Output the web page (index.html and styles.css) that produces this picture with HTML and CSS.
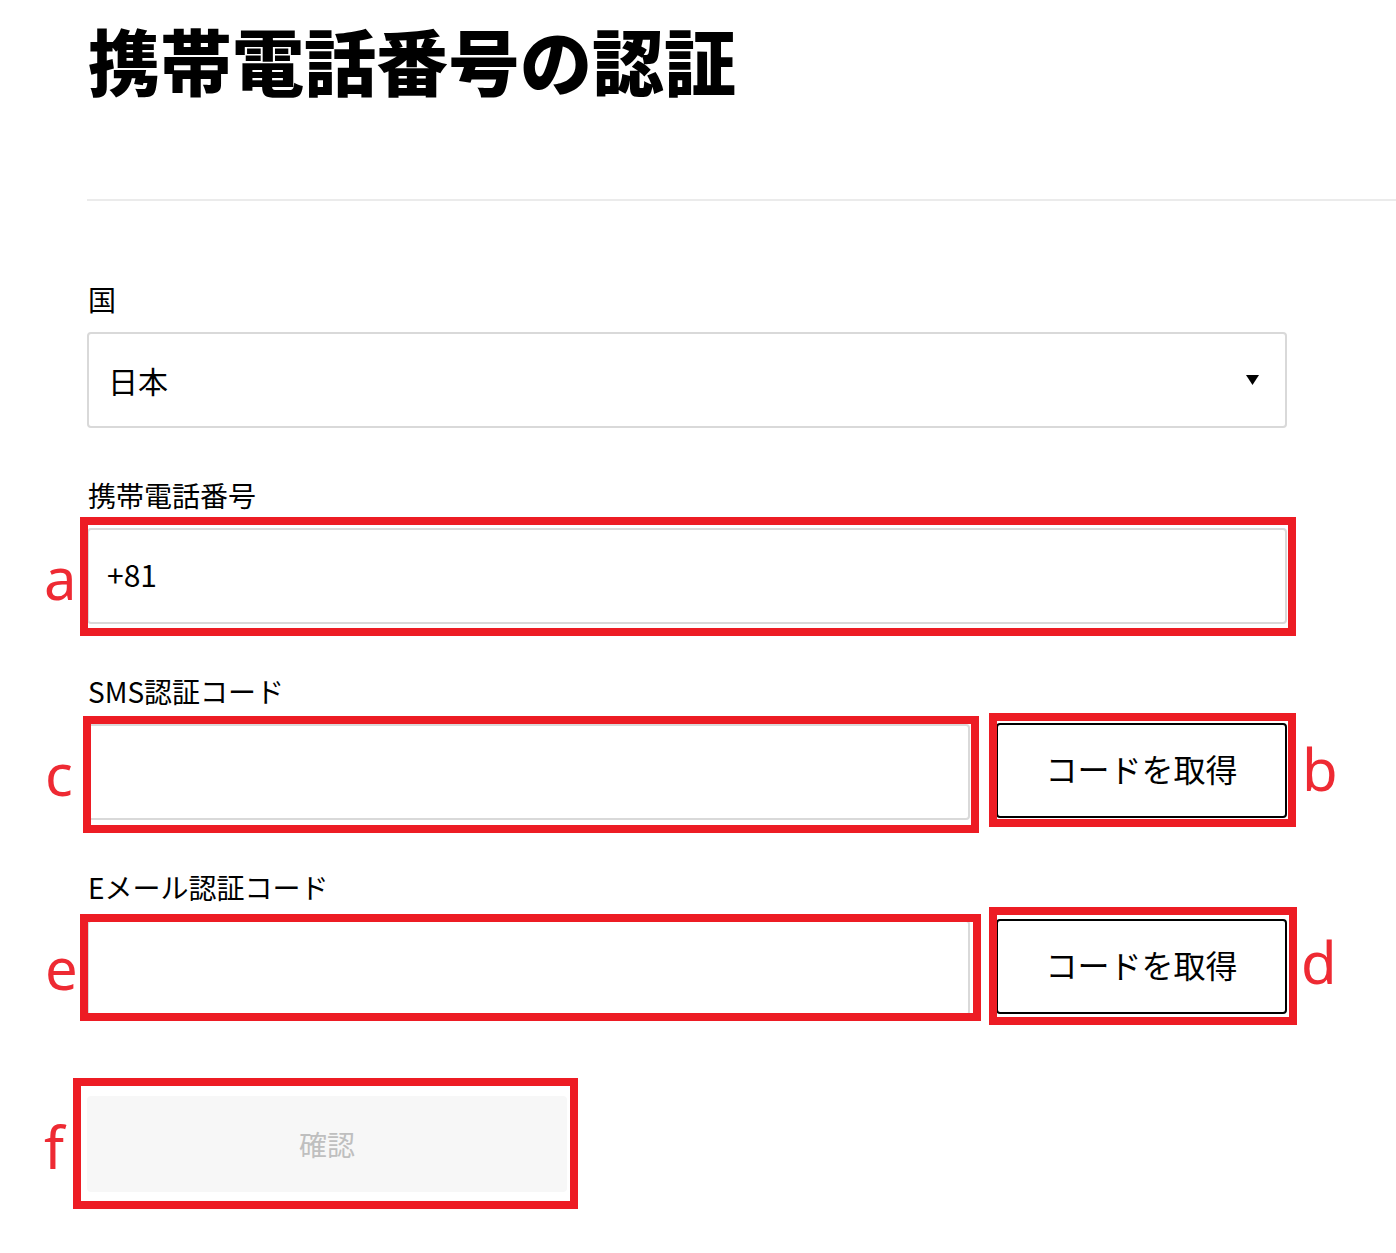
FILE: index.html
```html
<!DOCTYPE html>
<html lang="ja">
<head>
  <meta charset="UTF-8" />
  <meta name="viewport" content="width=device-width, initial-scale=1.0"/>
  <title>携帯電話番号の認証</title>
  <link rel="stylesheet" href="styles.css">
</head>
<body>
  <div class="page">
    <header class="head">
      <h1>携帯電話番号の認証</h1>
    </header>

    <form class="form" onsubmit="return false">
      <div class="field">
        <label>国</label>
        <div class="select">
          <span>日本</span>
          <svg class="caret" width="13" height="10" viewBox="0 0 13 10"><path d="M0 0h13L6.5 10z" fill="#000"/></svg>
        </div>
      </div>

      <div class="field">
        <label>携帯電話番号</label>
        <input class="input" type="text" value="+81">
      </div>

      <div class="field">
        <label>SMS認証コード</label>
        <div class="row">
          <input class="input" type="text">
          <button class="code-btn" type="button">コードを取得</button>
        </div>
      </div>

      <div class="field">
        <label>Eメール認証コード</label>
        <div class="row">
          <input class="input" type="text">
          <button class="code-btn" type="button">コードを取得</button>
        </div>
      </div>

      <button class="submit" type="submit" disabled>確認</button>
    </form>
  </div>

  <!-- annotation marks -->
  <div class="marks">
    <div class="box box-a"></div>
    <div class="box box-b"></div>
    <div class="box box-c"></div>
    <div class="box box-d"></div>
    <div class="box box-e"></div>
    <div class="box box-f"></div>
    <span class="tag tag-a">a</span>
    <span class="tag tag-b">b</span>
    <span class="tag tag-c">c</span>
    <span class="tag tag-d">d</span>
    <span class="tag tag-e">e</span>
    <span class="tag tag-f">f</span>
  </div>
</body>
</html>
```

FILE: styles.css
```css
body {
  margin: 0;
  font-family: "Noto Sans CJK JP", "Noto Sans", sans-serif;
  color: #000;
  background: #fff;
}
.page {
  padding-left: 87px;
}
.head {
  padding: 23px 0 104px;
  border-bottom: 2px solid #ebebeb;
}
.head h1 {
  margin: 0 0 0 1px;
  font-size: 72px;
  line-height: 72px;
  font-weight: 900;
}
.form {
  width: 1200px;
  padding-top: 81px;
}
.field {
  margin-bottom: 50px;
}
.field label {
  display: block;
  font-size: 28px;
  line-height: 34px;
  margin: 0 0 16px 1px;
}
.select,
.input {
  box-sizing: border-box;
  height: 96px;
  border: 2px solid #d9d9d9;
  border-radius: 4px;
  font-family: inherit;
  font-size: 30px;
  color: #000;
  background: #fff;
}
.select {
  display: flex;
  align-items: center;
  justify-content: space-between;
  padding: 0 26px 0 19px;
}
.input {
  display: block;
  width: 100%;
  padding: 0 18px 5px;
  outline: none;
}
.row {
  display: flex;
  gap: 26px;
  align-items: flex-start;
}
.row .input {
  flex: 1;
  width: auto;
  min-width: 0;
}
.code-btn {
  flex: none;
  width: 291px;
  height: 95px;
  margin-top: -1px;
  padding: 0 0 6px;
  border: 2px solid #000;
  border-radius: 4px;
  background: #fff;
  font-family: inherit;
  font-size: 32px;
  color: #000;
}
.submit {
  display: block;
  width: 480px;
  height: 96px;
  margin-top: 80px;
  border: none;
  border-radius: 4px;
  background: #f7f7f7;
  font-family: inherit;
  font-size: 28px;
  color: #bfbfbf;
}

/* red annotation overlay */
.marks {
  position: absolute;
  top: 0;
  left: 0;
}
.box {
  position: absolute;
  box-sizing: border-box;
  border: 8px solid #ed1c24;
}
.box-a { left: 80px; top: 517px; width: 1216px; height: 119px; }
.box-c { left: 83px; top: 716px; width: 896px; height: 117px; }
.box-b { left: 989px; top: 713px; width: 307px; height: 114px; }
.box-e { left: 80px; top: 914px; width: 901px; height: 107px; }
.box-d { left: 989px; top: 907px; width: 308px; height: 118px; }
.box-f { left: 73px; top: 1078px; width: 505px; height: 131px; }
.tag {
  position: absolute;
  font-family: "Noto Sans", sans-serif;
  font-size: 58px;
  line-height: 58px;
  color: #ee2a33;
}
.tag-a { left: 44px; top: 549px; }
.tag-c { left: 45px; top: 745px; }
.tag-b { left: 1302px; top: 740px; }
.tag-d { left: 1301px; top: 933px; }
.tag-e { left: 45px; top: 939px; }
.tag-f { left: 44px; top: 1118px; }
```
